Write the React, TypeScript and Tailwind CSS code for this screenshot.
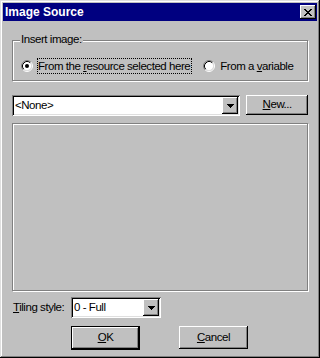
import React from 'react';

const raised = 'bg-[#c0c0c0] shadow-[inset_-1px_-1px_#000,inset_1px_1px_#fff,inset_-2px_-2px_#808080]';
const sunken = 'shadow-[inset_1px_1px_#808080,inset_-1px_-1px_#fff,inset_2px_2px_#000,inset_-2px_-2px_#dfdfdf]';
const etched = 'border border-[#808080] shadow-[inset_1px_1px_#fff,1px_1px_#fff]';

function Radio({ checked }: { checked?: boolean }) {
  return (
    <svg width="12" height="12" viewBox="0 0 12 12" className="shrink-0">
      <circle cx="6" cy="6" r="4.5" fill="#fff" />
      <path d="M2.11 9.89 A5.5 5.5 0 0 1 9.89 2.11" stroke="#808080" fill="none" />
      <path d="M9.89 2.11 A5.5 5.5 0 0 1 2.11 9.89" stroke="#fff" fill="none" />
      <path d="M2.82 9.18 A4.5 4.5 0 0 1 9.18 2.82" stroke="#000" fill="none" />
      <path d="M9.18 2.82 A4.5 4.5 0 0 1 2.82 9.18" stroke="#dfdfdf" fill="none" />
      {checked && <circle cx="6" cy="6" r="2" fill="#000" />}
    </svg>
  );
}

function Arrow() {
  return (
    <svg width="7" height="4" viewBox="0 0 7 4" shapeRendering="crispEdges">
      <path d="M0 0h7v1H0z M1 1h5v1H1z M2 2h3v1H2z M3 3h1v1H3z" fill="#000" />
    </svg>
  );
}

function Combo({ width, value }: { width: string; value: string }) {
  return (
    <div className={`${width} h-[21px] bg-white p-[2px] flex items-stretch ${sunken}`}>
      <span className="flex-1 pl-[1px] leading-[17px]">{value}</span>
      <div className={`w-[16px] flex items-center justify-center ${raised}`}>
        <Arrow />
      </div>
    </div>
  );
}

export default function App() {
  return (
    <div className="w-[320px] h-[358px] bg-[#c0c0c0] p-[3px] flex flex-col font-['Liberation_Sans',Arial,sans-serif] text-[11.5px] tracking-[-0.45px] text-black shadow-[inset_-1px_-1px_#000,inset_1px_1px_#dfdfdf,inset_-2px_-2px_#808080,inset_2px_2px_#fff]">
      {/* Title bar */}
      <div className="h-[18px] bg-[#000080] flex items-center justify-between pl-[2px] pr-[1px]">
        <span className="text-white font-bold text-[12px] tracking-normal leading-none">Image Source</span>
        <div className={`w-[16px] h-[14px] flex items-center justify-center ${raised}`}>
          <svg width="8" height="7" viewBox="0 0 8 7" shapeRendering="crispEdges">
            <path
              d="M0 0h2v1H0z M6 0h2v1H6z M1 1h2v1H1z M5 1h2v1H5z M2 2h4v1H2z M3 3h2v1H3z M2 4h4v1H2z M1 5h2v1H1z M5 5h2v1H5z M0 6h2v1H0z M6 6h2v1H6z"
              fill="#000"
            />
          </svg>
        </div>
      </div>

      <div className="flex flex-col px-[9px]">
        {/* Insert image group */}
        <div className={`relative mt-[19px] h-[41px] ${etched}`}>
          <span className="absolute left-[7px] -top-[8px] px-[1px] bg-[#c0c0c0] leading-[13px]">Insert image:</span>
          <div className="flex items-center h-[16px] mt-[17px] pl-[8px]">
            <Radio checked />
            <span className="ml-[4px] h-[16px] border border-dotted border-black pr-[1px] leading-[14px]">
              From the <u>r</u>esource selected here
            </span>
            <div className="ml-[11px]">
              <Radio />
            </div>
            <span className="ml-[5px] leading-[14px]">
              From a <u>v</u>ariable
            </span>
          </div>
        </div>

        {/* Resource row */}
        <div className="flex items-start mt-[14px]">
          <Combo width="w-[230px]" value="<None>" />
          <button className={`ml-[6px] w-[62px] h-[20px] flex items-center justify-center ${raised}`}>
            <span>
              <u>N</u>ew...
            </span>
          </button>
        </div>

        {/* Preview */}
        <div className={`mt-[7px] h-[168px] ${etched}`} />

        {/* Tiling row */}
        <div className="flex items-center mt-[6px]">
          <span className="w-[59px] pl-[1px]">
            <u>T</u>iling style:
          </span>
          <Combo width="w-[90px]" value="0 - Full" />
        </div>

        {/* Buttons */}
        <div className="flex mt-[8px] pl-[59px]">
          <button className="w-[69px] h-[24px] border border-black">
            <div className={`w-full h-full flex items-center justify-center ${raised}`}>
              <span>
                <u>O</u>K
              </span>
            </div>
          </button>
          <button className={`ml-[39px] w-[69px] h-[23px] flex items-center justify-center ${raised}`}>
            <span>
              <u>C</u>ancel
            </span>
          </button>
        </div>
      </div>
    </div>
  );
}
